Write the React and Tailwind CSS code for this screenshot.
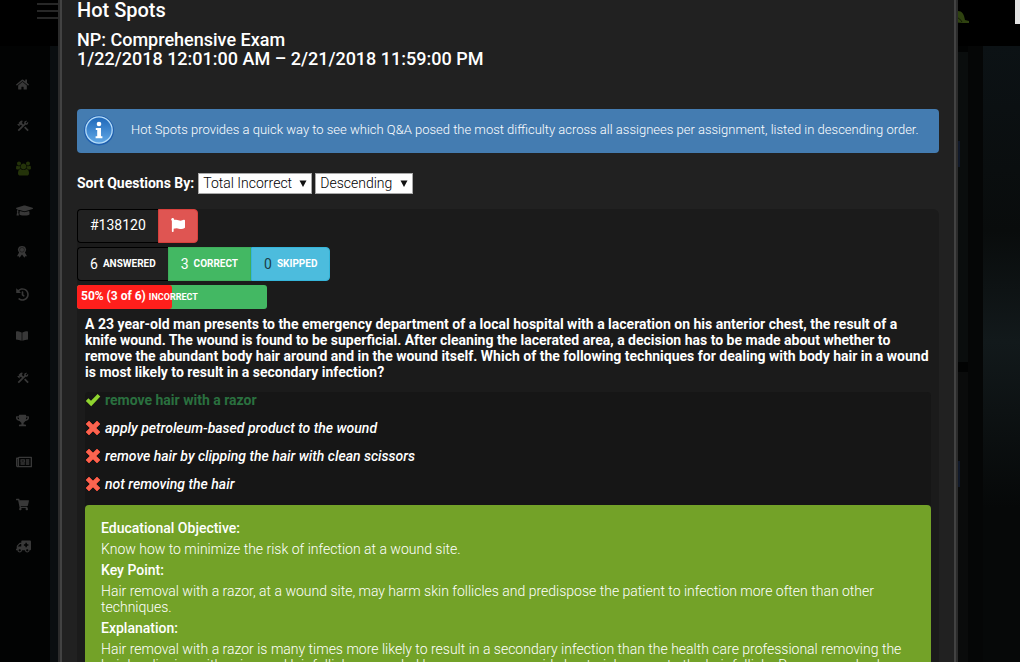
import { useState } from "react";
import {
  FaHome,
  FaGraduationCap,
  FaHistory,
  FaBookOpen,
  FaTrophy,
  FaRegNewspaper,
  FaShoppingCart,
  FaAmbulance,
  FaFlag,
} from "react-icons/fa";
import { MdConstruction } from "react-icons/md";

const UsersIcon = ({ className }) => (
  <svg className={className} width="1em" height="1em" viewBox="0 0 1920 1792" fill="currentColor">
    <path d="M593 896q-162 5-265 128h-134q-82 0-138-40.5t-56-118.5q0-353 124-353 6 0 43.5 21t97.5 42.5 119 21.5q67 0 133-23-5 37-5 66 0 139 81 256zM1664 1533q0 120-73 189.5t-194 69.5h-874q-121 0-194-69.5t-73-189.5q0-53 3.5-103.5t14-109 26.5-108.5 43-97.5 62-81 85.5-53.5 111.5-20q10 0 43 21.5t73 48 107 48 135 21.5 135-21.5 107-48 73-48 43-21.5q61 0 111.5 20t85.5 53.5 62 81 43 97.5 26.5 108.5 14 109 3.5 103.5zM640 256q0 106-75 181t-181 75-181-75-75-181 75-181 181-75 181 75 75 181zM1344 640q0 159-112.5 271.5t-271.5 112.5-271.5-112.5-112.5-271.5 112.5-271.5 271.5-112.5 271.5 112.5 112.5 271.5zM1920 865q0 78-56 118.5t-138 40.5h-134q-103-123-265-128 81-117 81-256 0-29-5-66 66 23 133 23 59 0 119-21.5t97.5-42.5 43.5-21q124 0 124 353zM1792 256q0 106-75 181t-181 75-181-75-75-181 75-181 181-75 181 75 75 181z" />
  </svg>
);

const RibbonIcon = ({ className }) => (
  <svg className={className} width="1em" height="1em" viewBox="0 0 10 12" fill="currentColor">
    <path d="M5 0 6.4.3 7.9.8 8.6 2 9.2 3.5 8.7 5.2 7.9 6.4 10 10.2 8.3 10.2 7.4 11.8 5 8.6 2.6 11.8 1.7 10.2 0 10.2 2.1 6.4 1.3 5.2.8 3.5 1.4 2 2.1.8 3.6.3z" />
    <circle cx="5" cy="3.8" r="2.4" fill="none" stroke="#020303" strokeWidth="0.4" />
  </svg>
);

const navItems = [
  { label: "Home", Icon: FaHome, size: "text-[13px]" },
  { label: "Tools", Icon: MdConstruction, size: "text-[14px]" },
  { label: "Users", Icon: UsersIcon, size: "text-[15px]", active: true },
  { label: "Courses", Icon: FaGraduationCap, size: "text-[17px]" },
  { label: "Awards", Icon: RibbonIcon, size: "text-[12px]" },
  { label: "History", Icon: FaHistory, size: "text-[13px]" },
  { label: "Library", Icon: FaBookOpen, size: "text-[12px]" },
  { label: "Settings", Icon: MdConstruction, size: "text-[14px]" },
  { label: "Leaderboard", Icon: FaTrophy, size: "text-[13px]" },
  { label: "News", Icon: FaRegNewspaper, size: "text-[16px]" },
  { label: "Store", Icon: FaShoppingCart, size: "text-[13px]" },
  { label: "Emergency", Icon: FaAmbulance, size: "text-[15px] -scale-x-100" },
];

const answers = [
  { text: "remove hair with a razor", correct: true },
  { text: "apply petroleum-based product to the wound" },
  { text: "remove hair by clipping the hair with clean scissors" },
  { text: "not removing the hair" },
];

const explanation = [
  {
    title: "Educational Objective:",
    text: "Know how to minimize the risk of infection at a wound site.",
  },
  {
    title: "Key Point:",
    text: "Hair removal with a razor, at a wound site, may harm skin follicles and predispose the patient to infection more often than other techniques.",
  },
  {
    title: "Explanation:",
    text: "Hair removal with a razor is many times more likely to result in a secondary infection than the health care professional removing the hair by clipping with scissors. Hair follicles wounded by a razor may provide bacterial access to the hair follicle. Razor wounds also lead to infection.",
  },
];

const Sidebar = () => (
  <nav className="w-[50px] shrink-0 bg-[#020303] pt-[63px]">
    <ul>
      {navItems.map(({ label, Icon, size, active }) => (
        <li key={label}>
          <a
            href="#"
            aria-label={label}
            className={`flex h-[42px] items-center pl-4 ${
              active ? "text-[#24330a]" : "text-[#383838]"
            }`}
          >
            <Icon className={size} />
          </a>
        </li>
      ))}
    </ul>
  </nav>
);

const InfoIcon = () => (
  <svg className="h-8 w-8 shrink-0" viewBox="0 0 32 32">
    <defs>
      <linearGradient id="info" x1="0" y1="0" x2="0" y2="1">
        <stop offset="0" stopColor="#1d66b8" />
        <stop offset="1" stopColor="#62a8e6" />
      </linearGradient>
    </defs>
    <circle cx="16" cy="15.5" r="15" fill="#1f5fae" />
    <circle cx="16" cy="15" r="13.2" fill="url(#info)" stroke="#b5dcf8" strokeWidth="1.3" />
    <circle cx="16" cy="9" r="2.3" fill="#fff" />
    <path d="M12.8 13h5.2v8.2h1.4v2h-6.8v-2h1.6v-6.2h-1.4z" fill="#fff" />
  </svg>
);

const CheckIcon = () => (
  <svg className="h-4 w-4" viewBox="0 0 16 16">
    <path d="M0.8 9 3.4 6.2 6 8.8 12.6 2 15.3 4.4 6.2 14.2z" fill="#8fd42f" />
  </svg>
);

const CrossIcon = () => (
  <svg className="h-4 w-4" viewBox="0 0 16 16">
    <path
      d="M4 1 8 5 12 1 15 4 11 8 15 12 12 15 8 11 4 15 1 12 5 8 1 4z"
      fill="#fa6450"
      stroke="#e04a38"
      strokeWidth="1"
    />
  </svg>
);

const SortSelect = ({ label, value, onChange, options }) => (
  <span className="relative inline-flex items-center">
    <select
      aria-label={label}
      value={value}
      onChange={(e) => onChange(e.target.value)}
      className="h-[21px] appearance-none border border-[#a9a9a9] bg-white pr-[19px] pb-[2px] pl-1 text-sm leading-4 font-light text-black"
    >
      {options.map((option) => (
        <option key={option}>{option}</option>
      ))}
    </select>
    <svg className="pointer-events-none absolute right-[5px] h-2 w-2" viewBox="0 0 8 8">
      <path d="M0.5 0.5h7L4 7z" fill="#111" />
    </svg>
  </span>
);

const Question = () => (
  <article className="rounded-md bg-[#1b1b1b] pb-6">
    <div className="flex text-sm leading-4">
      <span className="flex h-[34px] items-center rounded-l border border-r-0 border-black bg-[#212121] px-3 pb-[2px]">
        #138120
      </span>
      <button
        type="button"
        aria-label="Flag question"
        className="flex h-[34px] w-10 items-center justify-center rounded-r border border-[#d9403c] bg-[#df5552] pb-[2px]"
      >
        <FaFlag />
      </button>
    </div>

    <div className="mt-1 flex h-[34px] text-sm leading-4">
      <span className="flex items-center gap-[5px] rounded-l border border-r-0 border-black bg-[#212121] px-3">
        6 <span className="text-[10px] font-bold">ANSWERED</span>
      </span>
      <span className="flex items-center gap-[5px] border border-[#3fae5b] bg-[#43b863] px-3">
        3 <span className="text-[10px] font-bold">CORRECT</span>
      </span>
      <span className="flex items-center gap-[5px] rounded-r border border-[#35b5da] bg-[#4cbcdd] px-3">
        <span className="text-[#1c3c48]">0</span>
        <span className="text-[10px] font-bold">SKIPPED</span>
      </span>
    </div>

    <div className="relative mt-1 h-6 w-[190px] overflow-hidden rounded-[3px] bg-[#43b863]">
      <div className="h-full w-1/2 rounded-r-[3px] bg-[#ff1f1c]" />
      <p className="absolute inset-0 pl-1 text-xs leading-[22px] font-bold whitespace-nowrap">
        50% (3 of 6) <span className="text-[9px]">INCORRECT</span>
      </p>
    </div>

    <div className="px-2 pt-[7px]">
      <p className="text-sm leading-4 font-bold">
        A 23 year-old man presents to the emergency department of a local hospital with a laceration
        on his anterior chest, the result of a knife wound. The wound is found to be superficial.
        After cleaning the lacerated area, a decision has to be made about whether to remove the
        abundant body hair around and in the wound itself. Which of the following techniques for
        dealing with body hair in a wound is most likely to result in a secondary infection?
      </p>

      <div className="mt-3 rounded bg-[#161616]">
        <ul className="pb-px">
          {answers.map(({ text, correct }) => (
            <li
              key={text}
              className={`flex h-[28px] items-start gap-1 text-sm leading-4 ${
                correct ? "font-bold text-[#2a703f]" : "font-medium italic"
              }`}
            >
              {correct ? <CheckIcon /> : <CrossIcon />}
              {text}
            </li>
          ))}
        </ul>

        <dl className="rounded-t bg-[#73a228] px-4 pt-[15px] text-sm leading-4">
          {explanation.map(({ title, text }) => (
            <div key={title}>
              <dt className="mb-[5px] font-medium">{title}</dt>
              <dd className="mb-[5px] font-light">{text}</dd>
            </div>
          ))}
        </dl>
      </div>
    </div>
  </article>
);

export default function App() {
  const [sortField, setSortField] = useState("Total Incorrect");
  const [sortOrder, setSortOrder] = useState("Descending");

  return (
    <div className="relative flex h-screen overflow-hidden bg-[#020303] font-['Roboto',sans-serif] text-white">
      <header className="absolute inset-x-0 top-0 flex h-[46px] items-start justify-between bg-black">
        <button type="button" aria-label="Menu" className="ml-[37px] flex w-6 flex-col gap-[5px] pt-[3px]">
          <span className="h-[2px] bg-[#272727]" />
          <span className="h-[2px] bg-[#272727]" />
          <span className="h-[2px] bg-[#272727]" />
        </button>
        <svg className="mt-[10px] mr-[51px] h-4 w-5" viewBox="0 0 20 16">
          <path d="M0 10C1 4 4 1 9 1c4 0 6 3 7 9l4 1v2h-6L0 12z" fill="#2f4210" />
          <path d="M8 8c2 0 3 1 5 4" fill="none" stroke="#111a05" />
        </svg>
      </header>

      <Sidebar />
      <div className="mt-[46px] w-2 shrink-0 bg-[#0a0e10]" />

      <div className="z-10 flex min-w-0 flex-1 border-x-2 border-[#2b2b2b]">
        <main
          role="dialog"
          aria-labelledby="title"
          className="min-w-0 flex-1 border-x-2 border-[#424242] bg-[#212121] px-[15px]"
        >
          <h1 id="title" className="text-xl leading-5 font-medium">
            Hot Spots
          </h1>
          <h2 className="mt-[10px] text-lg leading-[19px] font-medium">
            NP: Comprehensive Exam
            <br />
            1/22/2018 12:01:00 AM – 2/21/2018 11:59:00 PM
          </h2>

          <div className="mt-[41px] flex h-11 items-center gap-4 rounded bg-[#447cb1] px-[6px] text-[13px] leading-4">
            <InfoIcon />
            <p className="pb-[2px] font-light">
              Hot Spots provides a quick way to see which Q&amp;A posed the most difficulty across
              all assignees per assignment, listed in descending order.
            </p>
          </div>

          <div className="mt-5 mb-[15px] flex h-[21px] items-center gap-[3px] text-sm leading-4">
            <span className="pr-px pb-px font-bold">Sort Questions By:</span>
            <SortSelect
              label="Sort field"
              value={sortField}
              onChange={setSortField}
              options={["Total Incorrect", "Total Correct", "Total Skipped"]}
            />
            <SortSelect
              label="Sort order"
              value={sortOrder}
              onChange={setSortOrder}
              options={["Descending", "Ascending"]}
            />
          </div>

          <Question />
        </main>
      </div>

      {/* dimmed page behind the dialog */}
      <aside className="flex w-[62px] shrink-0 pt-[46px]">
        <div className="flex w-[10px] flex-col gap-[10px] pt-[6px]">
          <div className="h-[310px] bg-[#0a0d0d] pt-[89px]">
            <div className="h-[26px] w-[2px] bg-[#101828]" />
          </div>
          <div className="flex-1 bg-[#0a0b0b] pt-[89px]">
            <div className="h-[26px] w-[2px] bg-[#101828]" />
          </div>
        </div>
        <div className="w-[15px] bg-[#050606]" />
        <div className="flex-1 bg-[linear-gradient(to_bottom,#0c1215,#090c0c_30%,#12191b_48%,#060808_75%)]" />
      </aside>
      <div className="absolute top-0 right-0 h-6 w-[5px] bg-[#e2e2e2]" />
    </div>
  );
}
